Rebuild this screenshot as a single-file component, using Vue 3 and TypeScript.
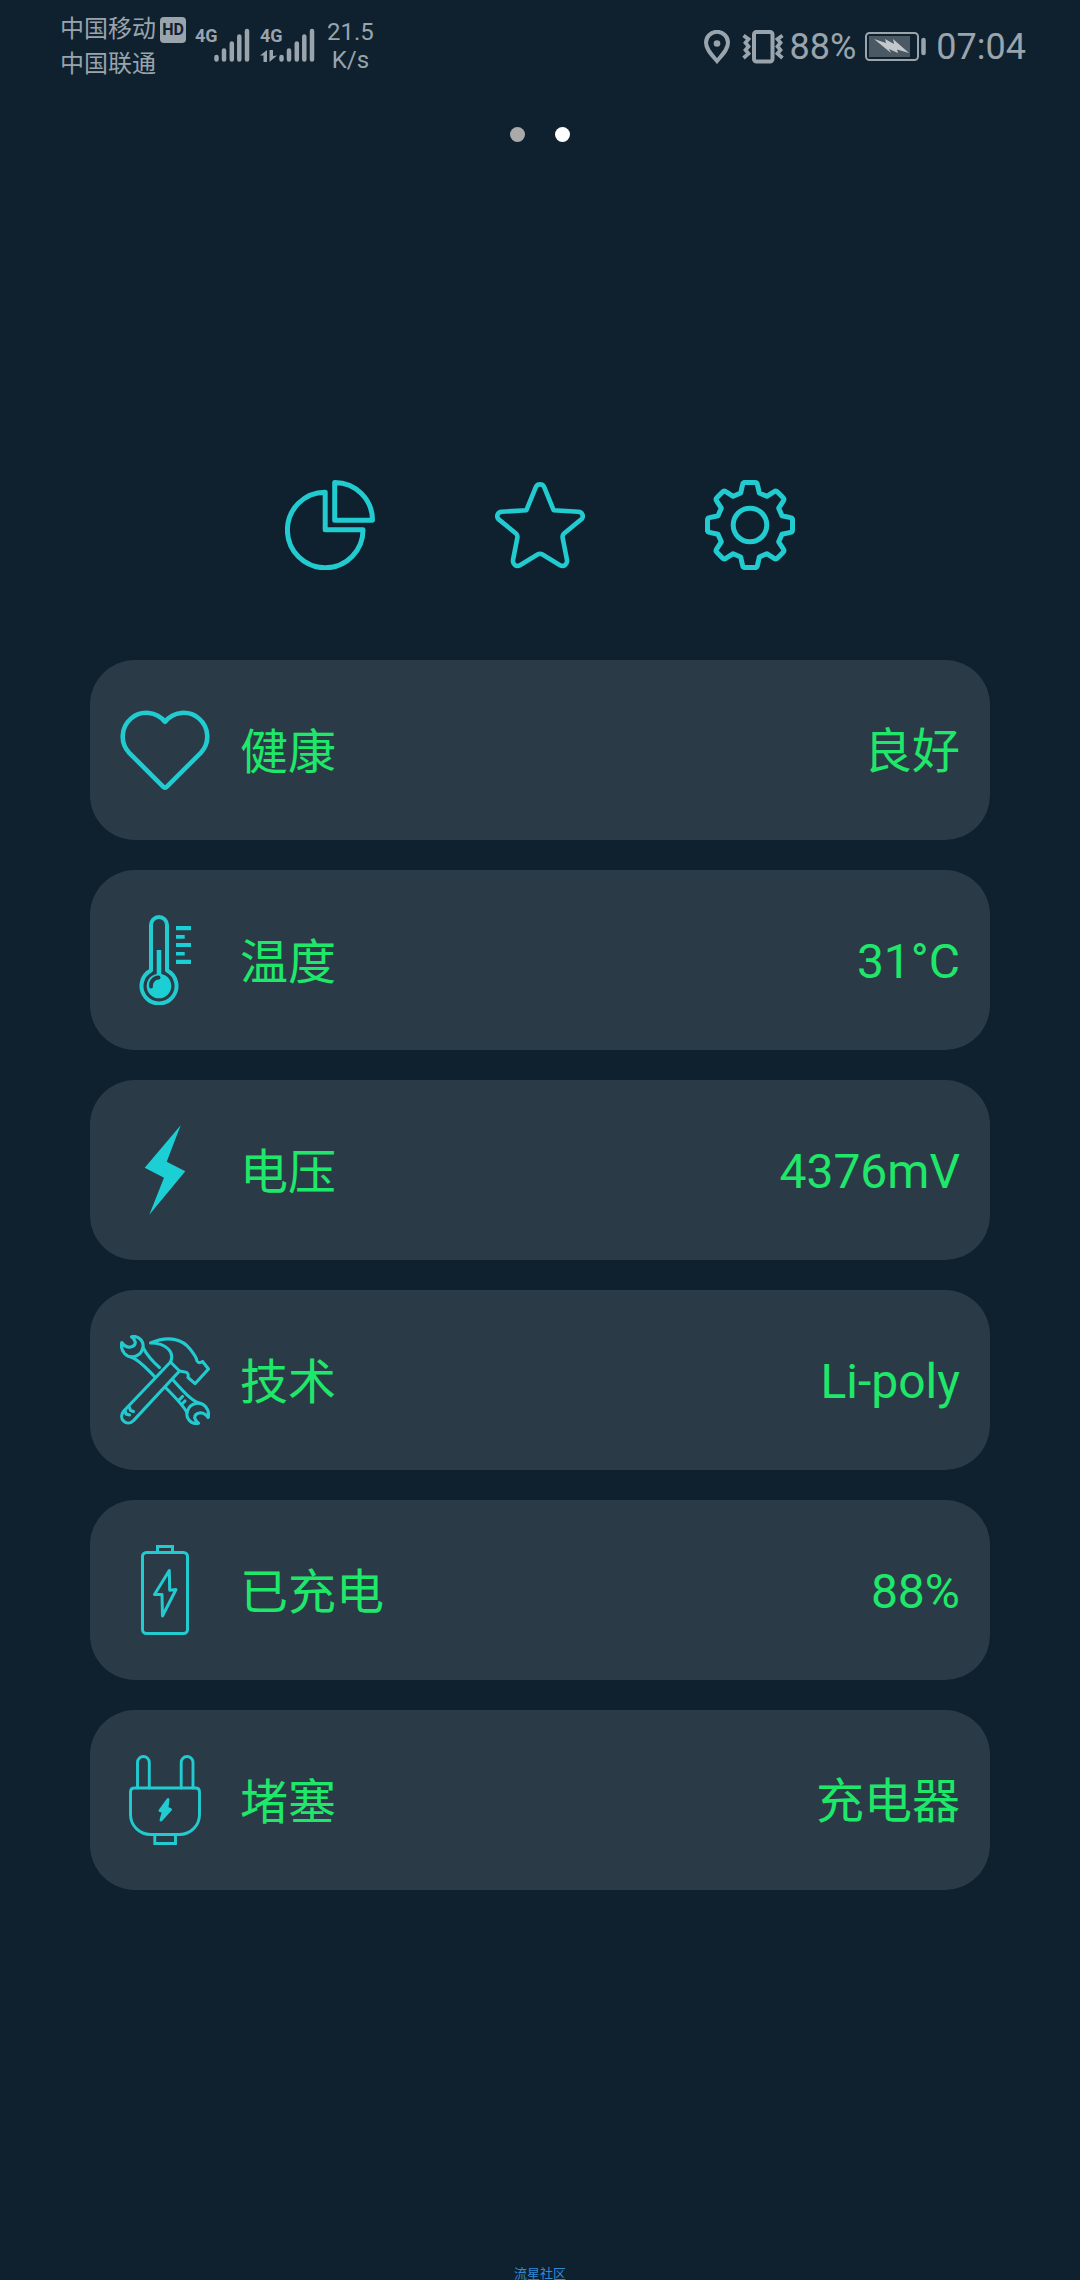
<script setup lang="ts">
import { ref } from 'vue'

type IconName = 'heart' | 'thermometer' | 'bolt' | 'tools' | 'battery' | 'plug'

interface BatteryFact {
  icon: IconName
  label: string
  value: string
}

const facts: BatteryFact[] = [
  { icon: 'heart', label: '健康', value: '良好' },
  { icon: 'thermometer', label: '温度', value: '31°C' },
  { icon: 'bolt', label: '电压', value: '4376mV' },
  { icon: 'tools', label: '技术', value: 'Li-poly' },
  { icon: 'battery', label: '已充电', value: '88%' },
  { icon: 'plug', label: '堵塞', value: '充电器' },
]

const pages = [1, 2]
const current = ref<number>(2)
const quarters = [0, 90, 180, 270]
</script>

<template>
  <div class="page">
    <header class="status">
      <div class="carriers">
        <div class="carrier">中国移动<span class="hd">HD</span></div>
        <div class="carrier">中国联通</div>
      </div>
      <div class="signal">
        <span class="net"><span>4G</span></span>
        <svg class="bars" viewBox="0 0 36 34" aria-hidden="true">
          <path d="M2.500 29v2.500M10 22.500v9M17.800 15.500v16M25.300 8.500v23M33 3v28.500" />
        </svg>
      </div>
      <div class="signal second">
        <span class="net">
          <span>4G</span>
          <svg class="arrows" viewBox="0 0 18 12" aria-hidden="true">
            <path d="M7 0v12H3.500V5.500H0zM9.500 0h3.500v6l4-.5-7.500 6.500z" />
          </svg>
        </span>
        <svg class="bars" viewBox="0 0 36 34" aria-hidden="true">
          <path d="M2.500 29v2.500M10 22.500v9M17.800 15.500v16M25.300 8.500v23M33 3v28.500" />
        </svg>
      </div>
      <div class="speed"><span>21.5</span><span>K/s</span></div>
      <div class="right">
        <svg class="pin" viewBox="0 0 26 34" aria-hidden="true">
          <path d="M13 31C8 25 2 19.500 2 12.800a11 11 0 0 1 22 0C24 19.500 18 25 13 31z" fill="none" stroke="currentColor" stroke-width="4" />
          <circle cx="13" cy="13.500" r="3.300" fill="currentColor" />
        </svg>
        <svg class="vibrate" viewBox="0 0 42 34" fill="none" stroke="currentColor" aria-hidden="true">
          <rect x="12" y="2" width="18.500" height="29.500" rx="2.500" stroke-width="4" />
          <path d="M1.500 5.500l5 3.700-3 3.600 3 3.600-3 3.600 3 3.600-5 4.400M40.500 5.500l-5 3.700 3 3.600-3 3.600 3 3.600-3 3.600 5 4.400" stroke-width="3.800" />
        </svg>
        <span class="figure percent">88%</span>
        <svg class="cell" viewBox="0 0 62 30" aria-hidden="true">
          <rect x="1" y="1" width="52" height="27" rx="3.500" fill="none" stroke="currentColor" stroke-width="2" />
          <rect x="4" y="4" width="41" height="21" fill="#4b5964" />
          <path d="M9 7l12 4-1-4 9 5-1-5 16 14-12-3.500 1 3.500-9-4 2 4z" fill="#c3c8cc" />
          <path d="M58.500 8v13" stroke="currentColor" stroke-width="4.500" stroke-linecap="round" />
        </svg>
        <span class="figure">07:04</span>
      </div>
    </header>

    <nav class="dots" aria-label="页面">
      <button
        v-for="page in pages"
        :key="page"
        type="button"
        class="dot"
        :class="{ active: page === current }"
        :aria-label="`第 ${page} 页`"
        @click="current = page"
      ></button>
    </nav>

    <nav class="toolbar" aria-label="工具">
      <button type="button" aria-label="统计">
        <svg class="icon" viewBox="0 0 90 90" stroke-width="5">
          <path d="M40.200 12.200A37.800 37.800 0 1 0 78 49.700H40.200z" />
          <path d="M49.700 2.500A37.800 37.800 0 0 1 87.500 40.200H49.700z" />
        </svg>
      </button>
      <button type="button" aria-label="收藏">
        <svg class="icon" viewBox="0 0 90 90" stroke-width="4.600">
          <path d="M40.800 7.200C42.300 3.400 47.700 3.400 49.200 7.200L58.600 30.200 83.300 31.800C87.600 32 89.300 36.800 86 39.600L69 53.500Q67.300 55 67.600 57.500L72 80C72.600 84.400 68.600 87.300 65 85.200L47.500 74.500Q45 73 42.500 74.500L25 85.200C21.400 87.300 17.400 84.400 18 80L22.400 57.500Q22.700 55 21 53.500L4 39.600C.7 36.800 2.400 32 6.700 31.800L31.400 30.200z" />
        </svg>
      </button>
      <button type="button" aria-label="设置">
        <svg class="icon" viewBox="0 0 90 90" stroke-width="5">
          <path
            v-for="angle in quarters"
            :key="angle"
            :transform="`rotate(${angle} 45 45)`"
            d="M40 2.500H50Q52 2.500 52.400 4.500L54.300 13 61.800 16.300 69.200 11.600Q71 10.400 72.500 12L78 17.500Q79.600 19 78.400 20.800L73.700 28.200 77 35.700 85.500 37.600Q87.500 38 87.500 40"
          />
          <circle cx="45" cy="45" r="16.800" />
        </svg>
      </button>
    </nav>

    <dl class="cards">
      <div v-for="fact in facts" :key="fact.label" class="card">
        <dt>
          <svg v-if="fact.icon === 'heart'" class="icon" viewBox="0 0 90 90" stroke-width="4.600">
            <path d="M45 16.800A23.700 23.700 0 1 0 9.200 47.800L42.800 81.400Q45 83.600 47.200 81.400L80.800 47.800A23.700 23.700 0 1 0 45 16.800z" />
          </svg>
          <svg v-else-if="fact.icon === 'thermometer'" class="icon" viewBox="0 0 90 90" stroke-width="4">
            <path d="M31 55.400V10A8 8 0 0 1 47 10V55.400A17.500 17.500 0 1 1 31 55.400z" />
            <circle class="solid" cx="39" cy="71" r="12.300" />
            <path class="solid" d="M36.700 35h4.600v26h-4.600zM56 11h15v4.300H56zM56 20h8.700v3.700H56zM56 28h15v4H56zM56 37h8.700v3.400H56zM56 44.700h15V49H56z" />
            <path class="glint" d="M31 71.500A8 8 0 0 1 38.500 62.500" />
          </svg>
          <svg v-else-if="fact.icon === 'bolt'" class="icon" viewBox="0 0 90 90">
            <path class="solid" d="M60.700 .3L46.700 36.700 65.300 46.300 29.300 89.700 44 52.700 24.700 42.700z" />
          </svg>
          <svg v-else-if="fact.icon === 'tools'" class="icon" viewBox="0 0 90 90" stroke-width="3.100">
            <path d="M50.500 27L3.800 76C-2.500 83.500 6.500 92.500 13.500 85.600L59.500 36z" />
            <path d="M50.500 27C55 17 46 8 30.500 8C50 -.5 63.500 5.500 70 14C74 19 76.500 22 77 26Q79 29 82.500 26.500L88.500 34 75 48.700 68 42.500Q69 37.500 65 37L59.500 36" />
            <path d="M5 75.500l1 3.500 3.500 1M9.500 72.500l1 3 3 1M59 65l3.500-3.500M62.500 68.500l2.500-2.500" />
            <path v-for="angle in [0, 180]" :key="angle" :transform="`rotate(${angle} 45 45)`" d="M11.500 1.800C19 0 25 7 22.500 14C20 22 10 24.500 4.500 18.500C1.500 15 1 11 1.800 7.500Q5 12 9.500 12.300Q15.500 11.500 15.300 7Q14.500 4 11.500 1.800z" />
            <path d="M23 12.500C27 20 32 26 39.500 32.500M11 22C19 24.500 26 33 34.500 41.500" />
            <path d="M67 77.500C63 70 55 62 45.500 52.500M79 68C71 65.500 62 55 53 45" />
          </svg>
          <svg v-else-if="fact.icon === 'battery'" class="icon" viewBox="0 0 90 90" stroke-width="3">
            <rect x="22.500" y="7.500" width="45" height="81" rx="4" />
            <path class="mitre" d="M37.500 7V1.500H52.500V7" />
            <path d="M49.300 25.500L34.500 49.500H42L42.500 71 56 44.500 49.700 45.200z" />
          </svg>
          <svg v-else class="icon" viewBox="0 0 90 90" stroke-width="2.900">
            <path d="M14.500 33H75.500Q79.500 33 79.500 37V59.500A20 20 0 0 1 59.500 79.500H30.500A20 20 0 0 1 10.500 59.500V37Q10.500 33 14.500 33z" />
            <path d="M17.500 33V7.400A5.900 5.900 0 0 1 29.300 7.400V33M61.200 33V7.400A5.900 5.900 0 0 1 73 7.400V33" />
            <path class="mitre" d="M34.800 79.500V88.500H55.500V79.500" />
            <path class="filled" d="M48 44.500L40 55.500 43.500 56.500 41 65 50.500 54.500 47 53z" />
          </svg>
          <span>{{ fact.label }}</span>
        </dt>
        <dd>{{ fact.value }}</dd>
      </div>
    </dl>

    <footer class="mark">流星社区</footer>
  </div>
</template>

<style>
body {
  margin: 0;
  background: #0f212e;
}
</style>

<style scoped>
.page {
  display: flex;
  flex-direction: column;
  min-height: 100vh;
  background: #0f212e;
  font-family: Roboto, 'Noto Sans CJK SC', sans-serif;
}

.status {
  display: flex;
  height: 90px;
  padding: 0 54px 0 60px;
  color: #99a4ad;
}

.carriers {
  display: flex;
  flex-direction: column;
  padding-top: 12px;
}

.carrier {
  display: flex;
  align-items: center;
  gap: 4px;
  height: 35px;
  font-size: 24px;
  line-height: 35px;
}

.hd {
  width: 26px;
  height: 26px;
  border-radius: 4px;
  background: #99a4ad;
  color: #0f212e;
  font-size: 16px;
  font-weight: 700;
  line-height: 26px;
  text-align: center;
}

.signal {
  display: flex;
  align-items: flex-start;
  padding-top: 28px;
  margin-left: 9px;
}

.signal.second {
  margin-left: 10px;
}

.net {
  display: flex;
  flex-direction: column;
  gap: 6px;
  width: 19px;
  font-size: 18px;
  font-weight: 700;
  line-height: 16px;
}

.arrows {
  width: 18px;
  height: 12px;
  fill: currentColor;
}

.bars {
  width: 36px;
  height: 34px;
  fill: none;
  stroke: currentColor;
  stroke-width: 4.500px;
  stroke-linecap: round;
}

.speed {
  display: flex;
  flex-direction: column;
  align-items: center;
  padding-top: 18px;
  margin-left: 12px;
  font-size: 24px;
  line-height: 28px;
}

.right {
  display: flex;
  align-items: center;
  height: 94px;
  margin-left: auto;
}

.pin {
  width: 26px;
  height: 34px;
  margin-right: 12px;
}

.vibrate {
  width: 42px;
  height: 34px;
  margin-right: 6px;
}

.cell {
  width: 62px;
  height: 30px;
  margin: 0 9px;
}

.figure {
  font-size: 36px;
  line-height: 42px;
}

.dots {
  display: flex;
  justify-content: center;
  gap: 30px;
  padding-top: 37px;
}

.dot {
  width: 15px;
  height: 15px;
  padding: 0;
  border: 0;
  border-radius: 50%;
  background: #aaaaaa;
}

.dot.active {
  background: #ffffff;
}

.toolbar {
  display: flex;
  justify-content: center;
  gap: 120px;
  padding-top: 338px;
}

.toolbar button {
  display: flex;
  padding: 0;
  border: 0;
  background: none;
}

.icon {
  flex: none;
  width: 90px;
  height: 90px;
  fill: none;
  stroke: #22cbd0;
  stroke-linecap: round;
  stroke-linejoin: round;
}

.icon .solid {
  fill: #1ccfd4;
  stroke: none;
}

.icon .filled {
  fill: #22cbd0;
}

.icon .glint {
  stroke: #2b3a47;
}

.icon .mitre {
  stroke-linejoin: miter;
}

.cards {
  display: flex;
  flex-direction: column;
  gap: 30px;
  margin: 90px 90px 0;
}

.card {
  display: flex;
  align-items: center;
  justify-content: space-between;
  height: 180px;
  padding: 0 30px;
  border-radius: 45px;
  background: #2b3a47;
  color: #1fe76a;
  font-size: 48px;
  line-height: 56px;
}

.card dt {
  display: flex;
  align-items: center;
  gap: 30px;
}

.card dt span {
  padding-top: 6px;
}

.card dd {
  margin: 0;
  padding-top: 4px;
}

.mark {
  margin-top: auto;
  color: #2f8bd4;
  font-size: 13px;
  line-height: 12px;
  text-align: center;
}
</style>
